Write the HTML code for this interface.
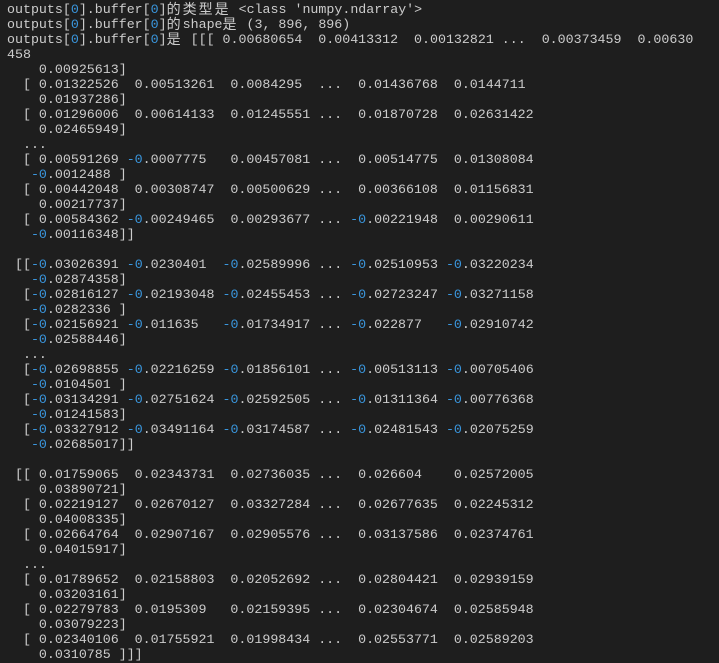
<!DOCTYPE html>
<html><head><meta charset="utf-8">
<style>
html,body{margin:0;padding:0;background:#0c0c0c;}
body{width:719px;height:663px;overflow:hidden;background:#1e1e1e;}
pre{margin:0;padding:2px 0 0 7px;font-family:"Liberation Mono",monospace;font-size:13.3px;line-height:15px;color:#cccccc;white-space:pre;}
b{font-weight:normal;color:#3a96dd;}
i{font-style:normal;display:inline-block;width:16px;font-family:"Noto Sans CJK SC",sans-serif;font-size:14px;line-height:15px;vertical-align:top;}
</style></head><body>
<pre>outputs[<b>0</b>].buffer[<b>0</b>]<i>的</i><i>类</i><i>型</i><i>是</i> &lt;class 'numpy.ndarray'&gt;
outputs[<b>0</b>].buffer[<b>0</b>]<i>的</i>shape<i>是</i> (3, 896, 896)
outputs[<b>0</b>].buffer[<b>0</b>]<i>是</i> [[[ 0.00680654  0.00413312  0.00132821 ...  0.00373459  0.00630
458
    0.00925613]
  [ 0.01322526  0.00513261  0.0084295  ...  0.01436768  0.0144711
    0.01937286]
  [ 0.01296006  0.00614133  0.01245551 ...  0.01870728  0.02631422
    0.02465949]
  ...
  [ 0.00591269 <b>-0</b>.0007775   0.00457081 ...  0.00514775  0.01308084
   <b>-0</b>.0012488 ]
  [ 0.00442048  0.00308747  0.00500629 ...  0.00366108  0.01156831
    0.00217737]
  [ 0.00584362 <b>-0</b>.00249465  0.00293677 ... <b>-0</b>.00221948  0.00290611
   <b>-0</b>.00116348]]

 [[<b>-0</b>.03026391 <b>-0</b>.0230401  <b>-0</b>.02589996 ... <b>-0</b>.02510953 <b>-0</b>.03220234
   <b>-0</b>.02874358]
  [<b>-0</b>.02816127 <b>-0</b>.02193048 <b>-0</b>.02455453 ... <b>-0</b>.02723247 <b>-0</b>.03271158
   <b>-0</b>.0282336 ]
  [<b>-0</b>.02156921 <b>-0</b>.011635   <b>-0</b>.01734917 ... <b>-0</b>.022877   <b>-0</b>.02910742
   <b>-0</b>.02588446]
  ...
  [<b>-0</b>.02698855 <b>-0</b>.02216259 <b>-0</b>.01856101 ... <b>-0</b>.00513113 <b>-0</b>.00705406
   <b>-0</b>.0104501 ]
  [<b>-0</b>.03134291 <b>-0</b>.02751624 <b>-0</b>.02592505 ... <b>-0</b>.01311364 <b>-0</b>.00776368
   <b>-0</b>.01241583]
  [<b>-0</b>.03327912 <b>-0</b>.03491164 <b>-0</b>.03174587 ... <b>-0</b>.02481543 <b>-0</b>.02075259
   <b>-0</b>.02685017]]

 [[ 0.01759065  0.02343731  0.02736035 ...  0.026604    0.02572005
    0.03890721]
  [ 0.02219127  0.02670127  0.03327284 ...  0.02677635  0.02245312
    0.04008335]
  [ 0.02664764  0.02907167  0.02905576 ...  0.03137586  0.02374761
    0.04015917]
  ...
  [ 0.01789652  0.02158803  0.02052692 ...  0.02804421  0.02939159
    0.03203161]
  [ 0.02279783  0.0195309   0.02159395 ...  0.02304674  0.02585948
    0.03079223]
  [ 0.02340106  0.01755921  0.01998434 ...  0.02553771  0.02589203
    0.0310785 ]]]</pre>
</body></html>
